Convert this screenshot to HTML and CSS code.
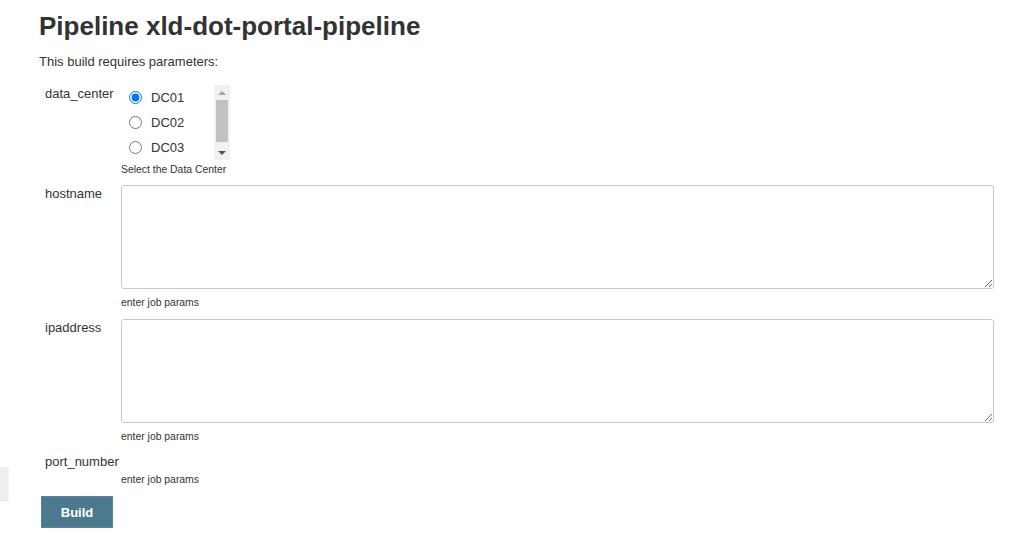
FILE: index.html
```html
<!DOCTYPE html>
<html>
<head>
<meta charset="utf-8">
<link rel="stylesheet" href="styles.css">
</head>
<body>
<div class="edge"></div>
<main class="main">
  <h1 class="title">Pipeline xld-dot-portal-pipeline</h1>
  <p class="intro">This build requires parameters:</p>
  <div class="params">
    <div class="label">data_center</div>
    <div class="field">
      <div class="radiobox">
        <div class="radiolist">
          <label class="radio"><input type="radio" name="dc" checked><span>DC01</span></label>
          <label class="radio"><input type="radio" name="dc"><span>DC02</span></label>
          <label class="radio"><input type="radio" name="dc"><span>DC03</span></label>
        </div>
        <div class="scrollbar">
          <div class="arrow up"></div>
          <div class="track"><div class="thumb"></div></div>
          <div class="arrow down"></div>
        </div>
      </div>
      <div class="desc desc-first">Select the Data Center</div>
    </div>

    <div class="label">hostname</div>
    <div class="field">
      <textarea class="ta"></textarea>
      <div class="desc">enter job params</div>
    </div>

    <div class="label">ipaddress</div>
    <div class="field">
      <textarea class="ta"></textarea>
      <div class="desc">enter job params</div>
    </div>

    <div class="label">port_number</div>
    <div class="field">
      <div class="desc desc-only">enter job params</div>
    </div>
  </div>
  <button class="build">Build</button>
</main>
</body>
</html>
```

FILE: styles.css
```css
html, body {
  margin: 0;
  padding: 0;
  background: #fff;
}
body {
  font-family: "Liberation Sans", Arial, sans-serif;
  color: #333;
  position: relative;
}
.edge {
  position: absolute;
  left: 0;
  top: 467px;
  width: 8px;
  height: 33px;
  background: #eeeeee;
  border-bottom: 1px solid #e6e6e6;
  border-right: 1px solid #f2f2f2;
}
.main {
  padding: 10px 16px 0 39px;
}
.title {
  margin: 0;
  font-size: 26px;
  line-height: 32px;
  font-weight: bold;
  color: #333;
}
.intro {
  margin: 12px 0 0 0;
  font-size: 13px;
  line-height: 16px;
}
.params {
  display: grid;
  grid-template-columns: 82px 1fr;
  margin-top: 15px;
}
.label {
  padding-left: 6px;
  padding-top: 1px;
  font-size: 13px;
  line-height: 16px;
  color: #333;
}
.field {
  min-width: 0;
}
.radiobox {
  display: flex;
  width: 109px;
  height: 75px;
}
.radiolist {
  flex: 1;
  overflow: hidden;
}
.radio {
  display: flex;
  align-items: center;
  height: 25px;
  font-size: 13px;
  color: #333;
}
.radio input {
  width: 13px;
  height: 13px;
  margin: 0 9px 0 8px;
}
.scrollbar {
  width: 16px;
  background: #f1f1f1;
  display: flex;
  flex-direction: column;
}
.arrow {
  height: 15px;
  display: flex;
  align-items: center;
  justify-content: center;
}
.arrow.up::before {
  content: "";
  border-left: 4px solid transparent;
  border-right: 4px solid transparent;
  border-bottom: 4px solid #a3a3a3;
}
.arrow.down::before {
  content: "";
  border-left: 4px solid transparent;
  border-right: 4px solid transparent;
  border-top: 4px solid #505050;
}
.track {
  flex: 1;
  padding: 0 2px;
}
.thumb {
  height: 42px;
  background: #c1c1c1;
}
.desc {
  font-size: 10.4px;
  line-height: 12px;
  color: #333;
  padding-top: 8px;
  padding-bottom: 10px;
}
.desc-first {
  padding-top: 4px;
  padding-bottom: 9px;
}
.desc-only {
  padding-top: 21px;
  padding-bottom: 10px;
}
.ta {
  display: block;
  box-sizing: border-box;
  width: 100%;
  height: 104px;
  margin: 0;
  border: 1px solid #c8c8c8;
  border-radius: 3px;
  background: #fff;
  resize: vertical;
  font-family: "Liberation Mono", monospace;
}
.build {
  display: block;
  margin: 0 0 0 2px;
  width: 72px;
  height: 32px;
  background: #4b7a8f;
  border: 1px solid #5a8498;
  color: #fff;
  font-family: "Liberation Sans", Arial, sans-serif;
  font-weight: bold;
  font-size: 13px;
  padding: 0;
}
```
